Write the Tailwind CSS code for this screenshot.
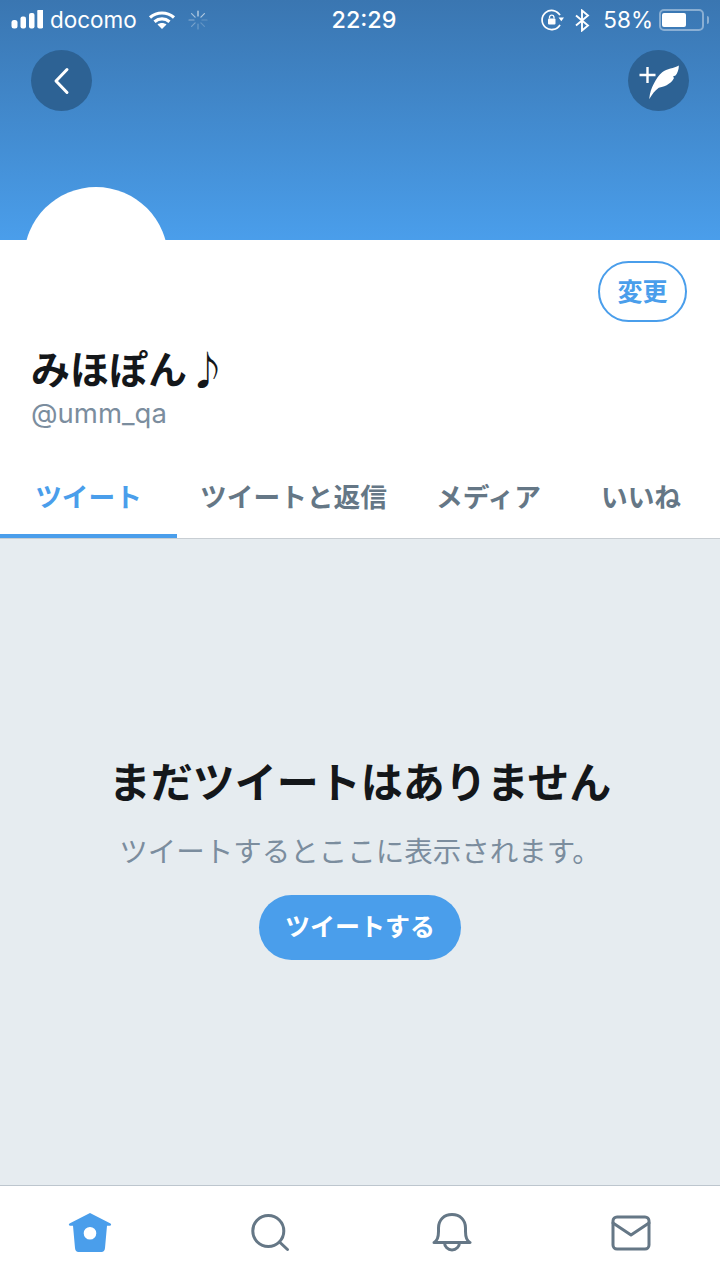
<!DOCTYPE html>
<html lang="ja">
<head>
<meta charset="utf-8">
<script src="https://cdn.jsdelivr.net/npm/@tailwindcss/browser@4"></script>
</head>
<body class="m-0 bg-white">
<div class="w-[720px] h-[1280px] flex flex-col overflow-hidden font-['Inter','Noto_Sans_CJK_JP',sans-serif] text-[#14171a]">
  <!-- Header -->
  <header class="relative h-[240px] shrink-0 overflow-hidden bg-gradient-to-b from-[#3a76b1] to-[#4a9eeb]">
    <div class="h-10 flex items-center justify-between pl-[11px] pr-[11px] text-white">
      <div class="flex items-center w-[224px]">
        <svg width="32" height="20" viewBox="0 0 32 20" fill="#fff"><rect x="0.500" y="10" width="6" height="8.500" rx="2.500"/><rect x="9.500" y="6.500" width="5.500" height="12" rx="2"/><rect x="18" y="3" width="5.500" height="15.500" rx="2"/><rect x="26.300" y="-0.700" width="6" height="19.200" rx="2"/></svg>
        <span class="ml-[7px] text-[22.500px] leading-none">docomo</span>
        <svg class="ml-[11px]" width="28" height="20" viewBox="0 0 28 20" fill="none" stroke="#fff" stroke-width="3.200"><path d="M2 7.500C9 1.500 19 1.500 26 7.500"/><path d="M6.500 11.800C11 8 17 8 21.500 11.800"/><path d="M14 19l-4.500-4.500C12 12.500 16 12.500 18.500 14.500z" fill="#fff" stroke="none"/></svg>
        <svg class="ml-[12px]" width="20" height="20" viewBox="0 0 20 20" stroke="#fff" stroke-width="1.200" stroke-linecap="round"><path d="M10 1v5" opacity=".75"/><path d="M16.400 3.600l-3.500 3.500" opacity=".6"/><path d="M19 10h-5" opacity=".2"/><path d="M16.400 16.400l-3.500-3.500" opacity=".2"/><path d="M10 19v-5" opacity=".25"/><path d="M3.600 16.400l3.500-3.500" opacity=".3"/><path d="M1 10h5" opacity=".4"/><path d="M3.600 3.600l3.500 3.500" opacity=".55"/></svg>
      </div>
      <span class="text-[23.300px] leading-none font-medium">22:29</span>
      <div class="flex items-center justify-end w-[216px]">
        <svg width="23" height="22" viewBox="0 0 23 22" fill="none" stroke="#fff" stroke-width="1.700"><path d="M19 15.800A9.600 9.600 0 1 1 19 6.200"/><path d="M17.500 8.500h5.500l-2.700 3.800z" fill="#fff" stroke="none"/><rect x="7" y="9.500" width="7.500" height="6" rx="1" fill="#fff" stroke="none"/><path d="M8.500 9.500V8a2.300 2.300 0 0 1 4.500 0v1.500" stroke-width="1.300"/></svg>
        <svg class="ml-[10px]" width="16" height="23" viewBox="0 0 16 23" fill="none" stroke="#fff" stroke-width="1.900"><path d="M2 6.500l12 10-6 5V1.500l6 5-12 10"/></svg>
        <span class="ml-[13px] text-[22.500px] leading-none">58%</span>
        <div class="ml-[6px] flex items-center">
          <div class="w-[45px] h-[22px] rounded-[5px] border-2 border-white/40 px-[1px] py-[2px]"><div class="w-[24px] h-full bg-white rounded-[2px]"></div></div>
          <div class="ml-[3px] w-[2px] h-[8px] bg-white/40 rounded-r-full"></div>
        </div>
      </div>
    </div>
    <div class="mt-[10px] flex justify-between px-[31px]">
      <button class="w-[61px] h-[61px] rounded-full bg-[#2d6294] flex items-center justify-center">
        <svg width="18" height="30" viewBox="0 0 18 30" fill="none" stroke="#fff" stroke-width="3" stroke-linecap="round" stroke-linejoin="round"><path d="M14 3.500L3 15l11 11.500"/></svg>
      </button>
      <button class="w-[61px] h-[61px] rounded-full bg-[#2d6294] flex items-center justify-center">
        <svg width="42" height="36" viewBox="0 0 42 36" fill="#fff"><path d="M8.300 4h2.400v6.800h6.800v2.400h-6.800V20H8.300v-6.800H1.500v-2.400h6.800z"/><path d="M11.200 36.200C11.800 30 13.500 25 15.800 20.800 18 16 21 12 24.200 9.200 29 5.500 36 5.500 40.800 2.500 41 6 39.500 10 37.500 12.500L35 13.500 36 15C34.500 18 33 19.500 30.800 20.800 28 23 25 24 20.800 24.800 17 27.500 14 31.500 11.200 36.200z"/></svg>
      </button>
    </div>
    <!-- Avatar circle clipped by the header bottom -->
    <div class="absolute left-[24px] top-[187px] w-[144px] h-[144px] rounded-full bg-white"></div>
  </header>

  <!-- Profile -->
  <section class="h-[220px] shrink-0 flex flex-col pl-[31px] pr-[32px]">
    <div class="flex justify-end pt-[21px] mr-[1px]">
      <button class="w-[89px] h-[61px] pt-[2px] rounded-full border-2 border-[#4a9eeb] text-[#4a9eeb] text-[25px] font-bold leading-none">変更</button>
    </div>
    <h1 class="mt-[25px] text-[39px] leading-[46px] font-bold">みほぽん<span class="ml-[1px] text-[39px]">♪</span></h1>
    <p class="mt-[3px] text-[27.500px] leading-[34px] text-[#7b8d9e]">@umm_qa</p>
  </section>

  <!-- Tabs -->
  <nav class="h-[79px] shrink-0 flex border-b border-[#c8ced3] text-[26.700px] font-bold text-[#657786]">
    <a class="w-[177px] h-[78px] flex items-center justify-center text-[#4a9eeb] border-b-[4px] border-[#4a9eeb]">ツイート</a>
    <a class="w-[233px] h-[78px] flex items-center justify-center pb-[4px]">ツイートと返信</a>
    <a class="w-[157px] h-[78px] flex items-center justify-center pb-[4px]">メディア</a>
    <a class="w-[153px] h-[78px] flex items-center justify-center pb-[4px] pr-[5px]">いいね</a>
  </nav>

  <!-- Empty state -->
  <main class="flex-1 bg-[#e6ecf0] flex flex-col items-center pt-[216px]">
    <h2 class="text-[42px] leading-[56px] font-bold">まだツイートはありません</h2>
    <p class="mt-[21px] text-[28.500px] leading-[40px] text-[#7b8d9e]">ツイートするとここに表示されます。</p>
    <button class="mt-[23px] w-[202px] h-[65px] rounded-full bg-[#4a9eeb] text-white text-[25px] font-bold leading-none">ツイートする</button>
  </main>

  <!-- Bottom bar -->
  <footer class="h-[95px] shrink-0 bg-white border-t border-[#bdc6ce] grid grid-cols-4 items-center">
    <div class="flex justify-center">
      <svg width="44" height="40" viewBox="0 0 44 40"><path fill-rule="evenodd" fill="#4a9eeb" d="M22 0L42.500 10.500c1.200.8.600 2.200-.8 2.200H39L37 35C36.800 37.800 35.500 39 33.500 39H10.500C8.500 39 7.200 37.800 7 35L5 12.700H2.300c-1.400 0-2-1.400-.8-2.200zM22 14a6.300 6.300 0 1 0 0 12.600A6.300 6.300 0 0 0 22 14z"/></svg>
    </div>
    <div class="flex justify-center">
      <svg width="40" height="40" viewBox="0 0 40 40" fill="none" stroke="#657786" stroke-width="3" stroke-linecap="round"><circle cx="18.300" cy="18" r="15.500"/><path d="M29.500 29l8 7.500"/></svg>
    </div>
    <div class="flex justify-center">
      <svg class="ml-[3px]" width="40" height="40" viewBox="0 0 40 40" fill="none" stroke="#657786" stroke-width="3" stroke-linecap="round" stroke-linejoin="round"><path d="M2 29.500c4-2 4.500-6 4.500-11V15C6.500 7 12 1.500 20 1.500S33.500 7 33.500 15v3.500c0 5 .5 9 4.500 11z"/><path d="M12.500 29.500a7.500 7.500 0 0 0 15 0"/></svg>
    </div>
    <div class="flex justify-center">
      <svg class="ml-[1px]" width="40" height="36" viewBox="0 0 40 36" fill="none" stroke="#657786" stroke-width="3" stroke-linejoin="round" stroke-linecap="round"><rect x="2" y="2" width="36" height="32" rx="4"/><path d="M2 8l18 12L38 8"/></svg>
    </div>
  </footer>
</div>
</body>
</html>
